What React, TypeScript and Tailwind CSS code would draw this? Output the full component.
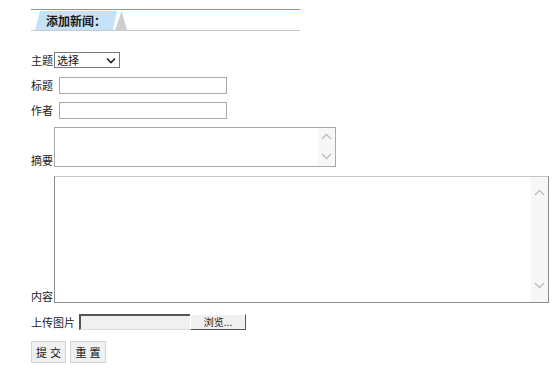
const font = { fontFamily: '"Noto Sans CJK SC", "Liberation Sans", sans-serif' };

function Header() {
  return (
    <div className="w-[269px]">
      <div className="h-px bg-[#4ea6e6]" />
      <div className="h-[21px] flex items-end border-b border-[#c8c8c8]">
        <div className="relative ml-[4px] h-[19px] w-[92px]">
          <div className="absolute inset-0 bg-[#c6e2f8] [clip-path:polygon(5px_0,82px_0,78px_100%,0_100%)]" />
          <div className="absolute right-0 top-0 h-full w-[12px] bg-[#cfcfcf] [clip-path:polygon(55%_0,100%_100%,0_100%)]" />
          <span className="relative block pl-[11px] text-[12px] leading-[19px] font-bold text-[#1a1a1a]">添加新闻：</span>
        </div>
      </div>
    </div>
  );
}

function Label({ text, w }: { text: string; w: string }) {
  return <span className={`${w} text-[11px] leading-[13px] text-[#222] shrink-0`}>{text}</span>;
}

function Scroll({ pad }: { pad: string }) {
  return (
    <div className={`absolute right-0 top-0 bottom-0 w-[17px] bg-[#f7f7f7] flex flex-col justify-between items-center ${pad}`}>
      <svg width="11" height="7" viewBox="0 0 11 7"><path d="M1 6 L5.5 1.5 L10 6" fill="none" stroke="#bdbdbd" strokeWidth="1.3" /></svg>
      <svg width="11" height="7" viewBox="0 0 11 7"><path d="M1 1 L5.5 5.5 L10 1" fill="none" stroke="#bdbdbd" strokeWidth="1.3" /></svg>
    </div>
  );
}

export default function App() {
  return (
    <div className="pl-[31px] pt-[9px] bg-white w-[554px] h-[375px]" style={font}>
      <Header />

      <div className="mt-[21px] flex items-center">
        <Label text="主题" w="w-[23px]" />
        <div className="w-[66px] h-[16px] border border-[#7a7a7a] flex items-center justify-between pl-[2px] pr-[3px]">
          <span className="text-[11px] leading-[12px] text-[#111]">选择</span>
          <svg width="10" height="7" viewBox="0 0 10 7"><path d="M1 1.5 L5 5.5 L9 1.5" fill="none" stroke="#222" strokeWidth="1.6" /></svg>
        </div>
      </div>

      <div className="mt-[9px] flex items-center">
        <Label text="标题" w="w-[28px]" />
        <div className="w-[168px] h-[17px] border border-[#a9a9a9] bg-white" />
      </div>

      <div className="mt-[8px] flex items-center">
        <Label text="作者" w="w-[28px]" />
        <div className="w-[168px] h-[17px] border border-[#a9a9a9] bg-white" />
      </div>

      <div className="mt-[8px] flex items-end">
        <Label text="摘要" w="w-[23px]" />
        <div className="relative w-[282px] h-[40px] border border-[#a9a9a9] bg-white">
          <Scroll pad="pt-[5px] pb-[6px]" />
        </div>
      </div>

      <div className="mt-[9px] flex items-end">
        <Label text="内容" w="w-[23px]" />
        <div className="relative w-[495px] h-[127px] border border-[#8c8c8c] border-t-[#c4c4c4] bg-white">
          <Scroll pad="pt-[12px] pb-[13px]" />
        </div>
      </div>

      <div className="mt-[11px] flex items-center">
        <Label text="上传图片" w="w-[48px]" />
        <div className="flex h-[16px]">
          <div className="w-[111px] h-full bg-[#f0f0f0] border-t-2 border-l-2 border-[#555] border-b border-b-[#ddd]" />
          <div className="w-[56px] h-full bg-[#f0f0f0] border border-[#555] border-t-white border-l-white flex items-center justify-center">
            <span className="text-[10px] leading-[12px] text-[#222]">浏览...</span>
          </div>
        </div>
      </div>

      <div className="mt-[11px] flex gap-[4px]">
        <div className="w-[35px] h-[22px] bg-[#f0f0f0] border border-[#d4d4d4] flex items-center justify-center text-[11px] text-[#111] tracking-[3px] pl-[3px]">提交</div>
        <div className="w-[36px] h-[22px] bg-[#f0f0f0] border border-[#d4d4d4] flex items-center justify-center text-[11px] text-[#111] tracking-[3px] pl-[3px]">重置</div>
      </div>
    </div>
  );
}
